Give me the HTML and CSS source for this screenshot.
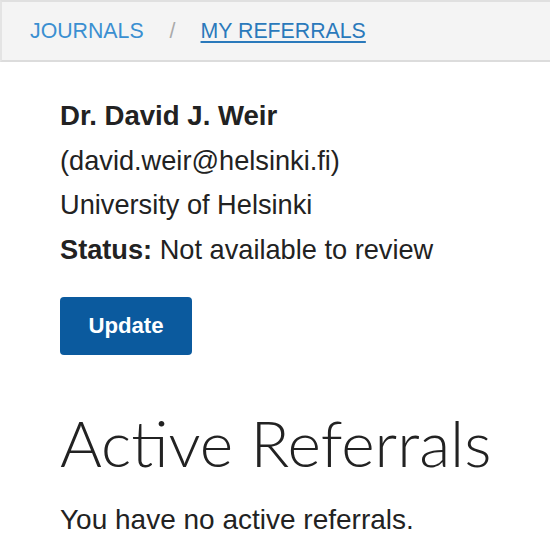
FILE: index.html
```html
<!DOCTYPE html>
<html>
<head>
<meta charset="utf-8">
<link rel="stylesheet" href="styles.css">
</head>
<body>
<nav class="crumbs">
  <a class="crumb" href="#">JOURNALS</a>
  <span class="sep">/</span>
  <a class="crumb current" href="#">MY REFERRALS</a>
</nav>
<main class="content">
  <section class="profile">
    <p class="name">Dr. David J. Weir</p>
    <p class="line">(david.weir@helsinki.fi)</p>
    <p class="line">University of Helsinki</p>
    <p class="line"><strong>Status:</strong> Not available to review</p>
  </section>
  <button class="btn">Update</button>
  <h1 class="title">Active Referrals</h1>
  <p class="empty">You have no active referrals.</p>
</main>
</body>
</html>
```
FILE: styles.css
```css
html, body {
  margin: 0;
  padding: 0;
  background: #fff;
}
body {
  font-family: "Liberation Sans", Arial, sans-serif;
  color: #222;
  width: 550px;
  overflow: hidden;
}
.crumbs {
  display: flex;
  align-items: center;
  height: 58px;
  padding-left: 28px;
  background: #f4f4f4;
  border-top: 2px solid #e0e0e0;
  border-bottom: 2px solid #dcdcdc;
  border-left: 2px solid #e4e4e4;
  box-sizing: content-box;
  font-size: 21.3px;
}
.crumb {
  color: #3a8fd1;
  text-decoration: none;
}
.crumb.current {
  color: #2a79bb;
  text-decoration: underline;
  text-underline-offset: 3px;
}
.sep {
  color: #aaa;
  margin: 0 25px 0 26px;
}
.content {
  padding: 0 60px;
}
.profile {
  padding-top: 32px;
}
.profile p {
  margin: 0;
  font-size: 27.2px;
  line-height: 44.6px;
}
.profile .name {
  font-weight: bold;
  font-size: 27.6px;
}
.btn {
  margin-top: 25px;
  width: 132px;
  height: 58px;
  border: none;
  border-radius: 4px;
  background: #0b5a9e;
  color: #fff;
  font-family: "Liberation Sans", Arial, sans-serif;
  font-weight: bold;
  font-size: 22.2px;
  padding: 0;
}
.title {
  margin: 56px 0 0;
  font-family: Lato, sans-serif;
  font-weight: 300;
  font-size: 64px;
  line-height: 64px;
  white-space: nowrap;
  color: #222;
}
.empty {
  margin: 29px 0 0;
  font-size: 28px;
}
```
